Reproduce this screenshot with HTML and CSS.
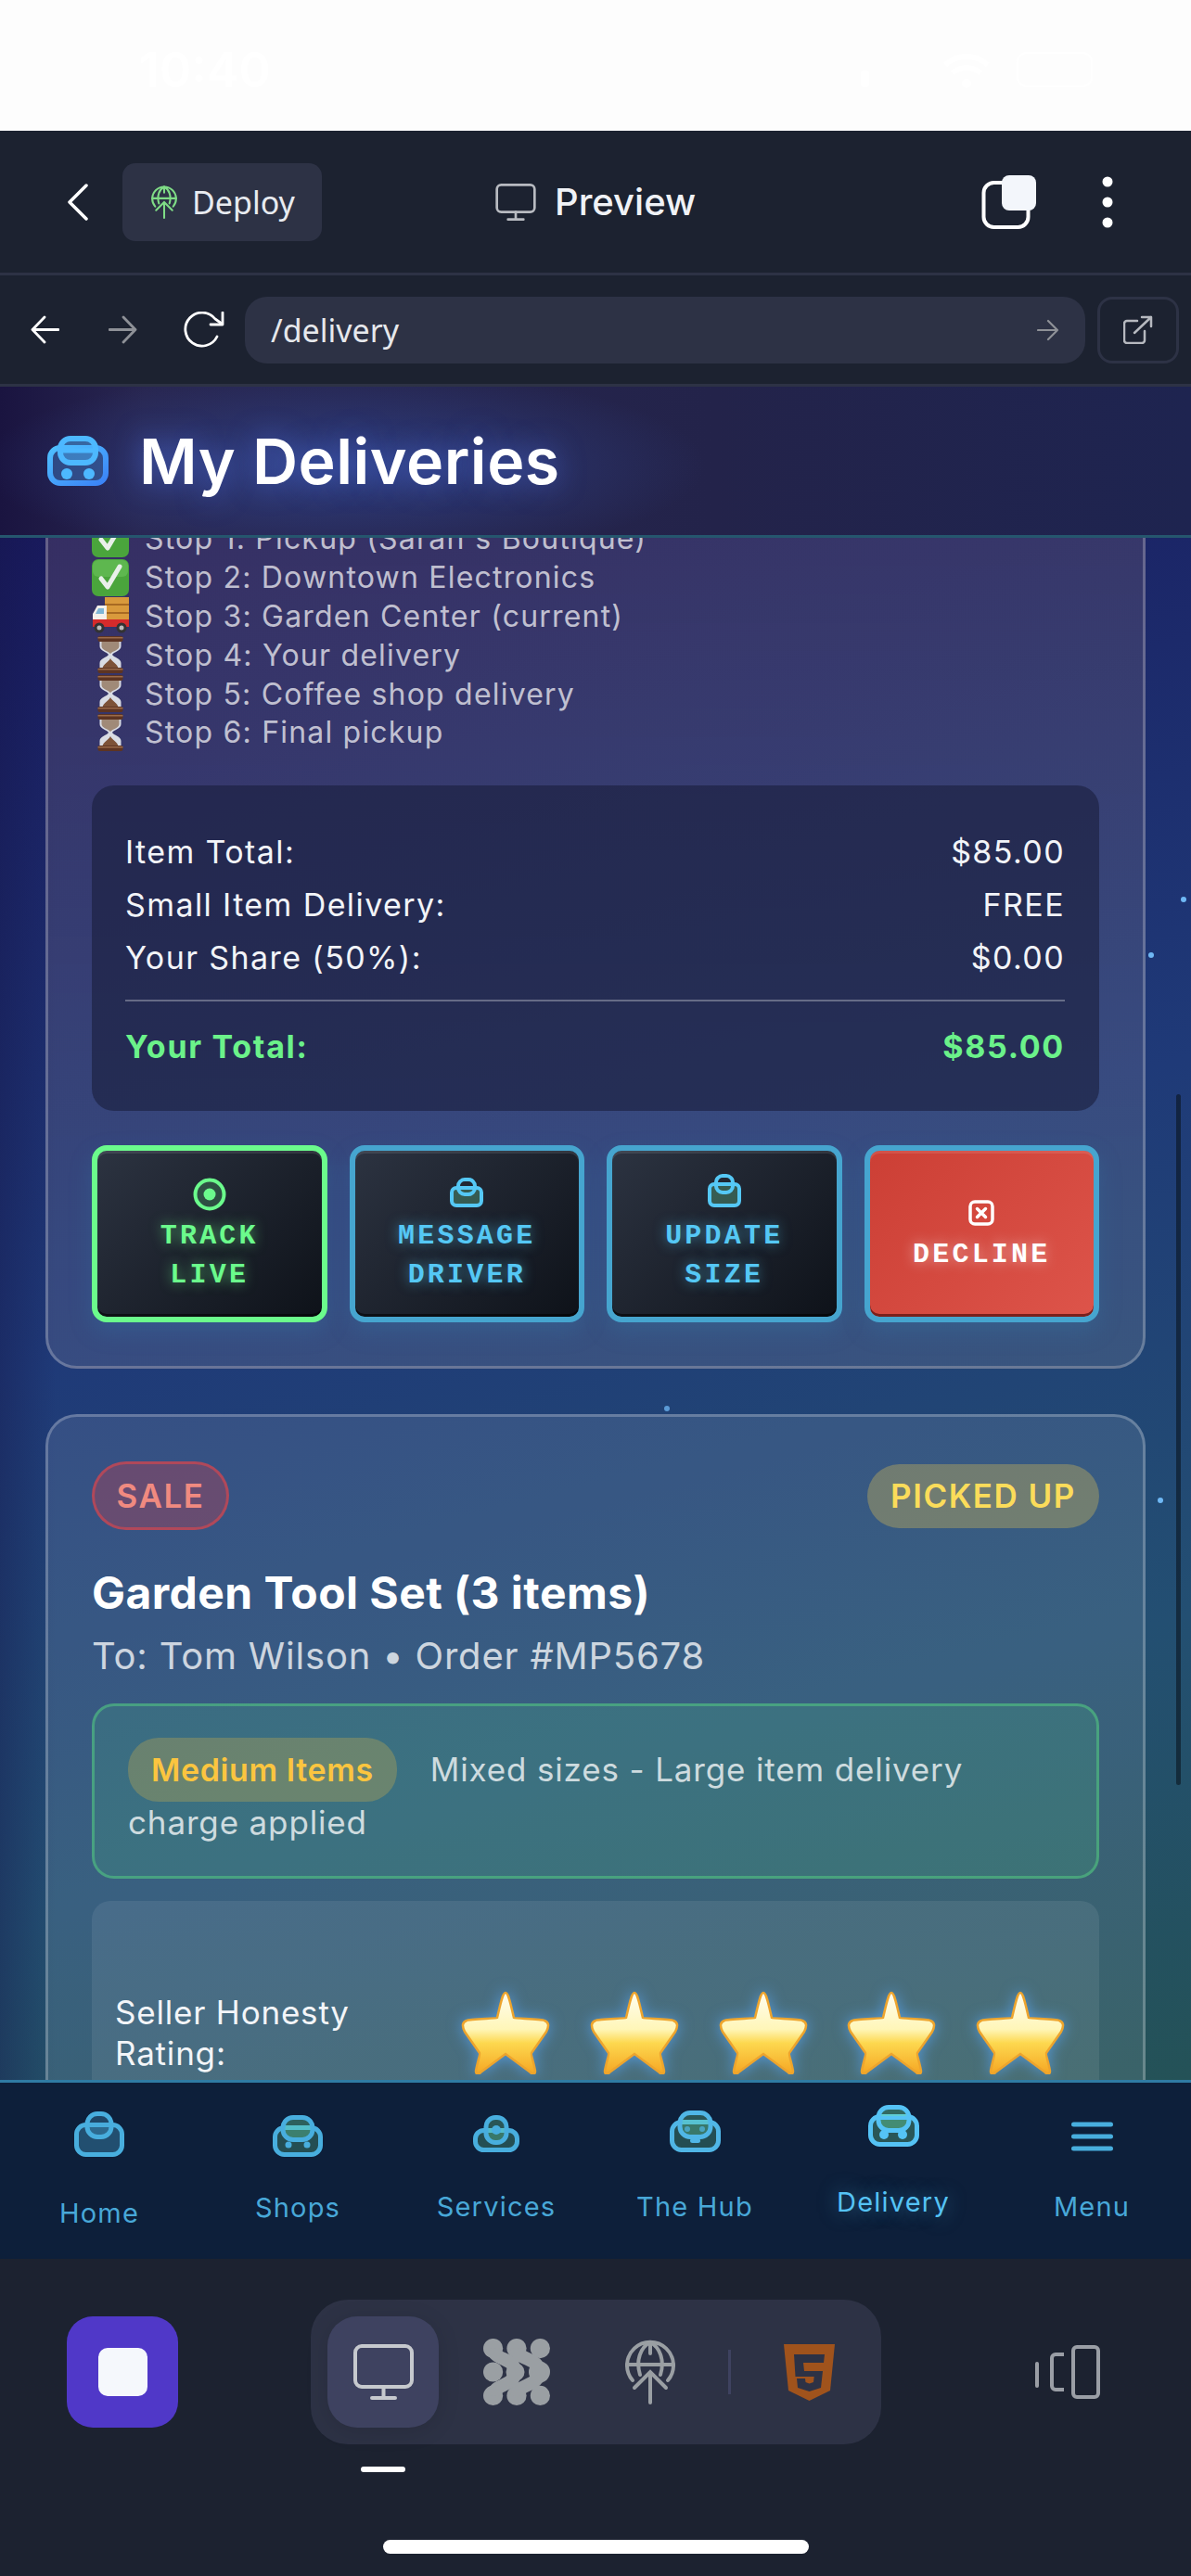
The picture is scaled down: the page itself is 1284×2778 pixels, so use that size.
FILE: index.html
```html
<!DOCTYPE html>
<html lang="en">
<head>
<meta charset="utf-8">
<title>My Deliveries</title>
<link rel="stylesheet" href="styles.css">
</head>
<body>
<svg class="defs" width="0" height="0" aria-hidden="true">
  <defs>
    <linearGradient id="logoGrad" x1="0" y1="0" x2="1" y2="1"><stop offset="0" stop-color="#4fc0ff"/><stop offset="1" stop-color="#3b82f6"/></linearGradient>
    <linearGradient id="starGrad" x1="0" y1="0" x2="0" y2="1"><stop offset="0" stop-color="#fffdf0"/><stop offset=".45" stop-color="#fff6b8"/><stop offset=".62" stop-color="#fdd84f"/><stop offset="1" stop-color="#f5a623"/></linearGradient>
    <symbol id="i-check" viewBox="0 0 40 40"><rect width="40" height="40" rx="7" fill="#4aa53c"/><rect x="1" y="1" width="38" height="18" rx="6" fill="#6cc35c" opacity=".6"/><path d="M10 21l7 9L30 8" fill="none" stroke="#e9f0ea" stroke-width="5" stroke-linecap="round" stroke-linejoin="round"/></symbol>
    <symbol id="i-truck" viewBox="0 0 40 40"><rect x="14" y="0" width="26" height="26" fill="#d99a3c"/><path d="M14 8h26M14 17h26" stroke="#a86a22" stroke-width="2"/><path d="M1 30V18l5-9h10v21z" fill="#f4f0ea"/><path d="M4 18l3-6h6v6z" fill="#7fb6d6"/><rect x="1" y="24" width="39" height="8" fill="#d52b2b"/><circle cx="8" cy="33" r="5.5" fill="#333"/><circle cx="8" cy="33" r="2.5" fill="#bbb"/><circle cx="32" cy="33" r="5.5" fill="#333"/><circle cx="32" cy="33" r="2.5" fill="#bbb"/></symbol>
    <symbol id="i-hour" viewBox="0 0 27 40"><path d="M2 5h23v6c0 5-8 6-9.500 9 1.500 3 9.500 4 9.500 9v6H2v-6c0-5 8-6 9.500-9C10 17 2 16 2 11z" fill="#d9dce4"/><path d="M4 6h19v5c0 4-7 5-9.500 8C11 16 4 15 4 11z" fill="#a08a78"/><path d="M13.500 24c2 4 8 6 8.500 11H5c.500-5 6.500-7 8.500-11z" fill="#7d5238"/><rect width="27" height="6" rx="2" fill="#5d3422"/><rect y="1" width="27" height="1.500" fill="#9a6a4a"/><rect y="34" width="27" height="6" rx="2" fill="#5d3422"/><rect y="35" width="27" height="1.500" fill="#9a6a4a"/></symbol>
    <symbol id="i-star" viewBox="0 0 96 90"><path d="M48 2c3 0 5 10 9 27 2 1 30 1 33 3 5 2 5 6 2 12L76 67c-1 1 4 16 4 20 0 3-3 3-5 1L48 68 21 88c-2 2-5 2-5-1 0-4 5-19 4-20L4 44C1 38 1 34 6 32c3-2 31-2 33-3C43 12 45 2 48 2z" fill="url(#starGrad)" stroke="#eda42d" stroke-width="2.500"/></symbol>
    <symbol id="i-globe" viewBox="0 0 54 70"><g fill="none" stroke="currentColor" stroke-width="4" stroke-linecap="round"><path d="M8 44A25 25 0 1 1 46 44"/><path d="M16 38C11 22 17 8 27 3c10 5 16 19 11 35"/><path d="M2 27h50"/><path d="M27 3v12"/><path d="M27 68V36M10 52l17-17 17 17"/></g></symbol>
    <symbol id="i-monitor" viewBox="0 0 65 60"><g fill="none" stroke="currentColor" stroke-width="4" stroke-linecap="round"><rect x="2" y="2" width="61" height="44" rx="7"/><path d="M32.500 46v12M20 58h25"/></g></symbol>
  </defs>
</svg>

<div class="screen">
  <div class="status">
    <span class="clock">10:40</span>
    <svg class="status-icons" width="255" height="44" viewBox="0 0 255 44"><rect x="3" y="22" width="9" height="18" rx="3" fill="#fff"/><path d="M94 16a34 34 0 0 1 46 0M102 25a22 22 0 0 1 30 0" fill="none" stroke="#fff" stroke-width="6"/><circle cx="117" cy="36" r="5" fill="#fff"/><rect x="172" y="3" width="80" height="36" rx="10" fill="none" stroke="#fff" stroke-width="2"/></svg>
  </div>

  <header class="topbar">
    <svg class="back" width="23" height="40" viewBox="0 0 23 40"><path d="M21 2L3 20l18 18" fill="none" stroke="#fff" stroke-width="3.500" stroke-linecap="round" stroke-linejoin="round"/></svg>
    <div class="deploy">
      <svg class="deploy-icon" width="28" height="36"><use href="#i-globe"/></svg>
      <span>Deploy</span>
    </div>
    <div class="preview">
      <svg class="preview-icon" width="44" height="40"><use href="#i-monitor"/></svg>
      <span>Preview</span>
    </div>
    <svg class="tabs" width="59" height="59" viewBox="0 0 59 59"><rect x="2.500" y="9" width="48" height="48" rx="11" fill="none" stroke="#fff" stroke-width="4"/><rect x="22" y="1" width="37" height="38" rx="8" fill="#f3f6fb"/></svg>
    <svg class="kebab" width="12" height="56" viewBox="0 0 12 56"><circle cx="6" cy="6" r="5.500" fill="#fff"/><circle cx="6" cy="28" r="5.500" fill="#fff"/><circle cx="6" cy="50" r="5.500" fill="#fff"/></svg>
  </header>

  <nav class="urlbar">
    <svg class="nav-btn" width="31" height="31" viewBox="0 0 31 31"><path d="M30 15.500H2M15 2L2 15.500 15 29" fill="none" stroke="#fff" stroke-width="2.800" stroke-linecap="round" stroke-linejoin="round"/></svg>
    <svg class="nav-btn nav-next" width="31" height="31" viewBox="0 0 31 31"><path d="M1 15.500h28M16 2l13 13.500L16 29" fill="none" stroke="#8e9197" stroke-width="2.800" stroke-linecap="round" stroke-linejoin="round"/></svg>
    <svg class="nav-btn nav-reload" width="44" height="40" viewBox="0 0 44 40"><path d="M36 27A18 18 0 1 1 34 8l7 5" fill="none" stroke="#fff" stroke-width="2.800" stroke-linecap="round"/><path d="M42 1v13H29" fill="none" stroke="#fff" stroke-width="2.800" stroke-linecap="round" stroke-linejoin="round"/></svg>
    <div class="address">
      <span>/delivery</span>
      <svg width="24" height="24" viewBox="0 0 24 24"><path d="M1 12h21M12 2l10 10-10 10" fill="none" stroke="#8e9197" stroke-width="2.200" stroke-linecap="round" stroke-linejoin="round"/></svg>
    </div>
    <div class="open-box">
      <svg width="32" height="31" viewBox="0 0 32 31"><path d="M15 6H4a3 3 0 0 0-3 3v18a3 3 0 0 0 3 3h16a3 3 0 0 0 3-3V17" fill="none" stroke="#b6b9bf" stroke-width="2.500" stroke-linecap="round"/><path d="M12 19L30 2M20 2h10v10" fill="none" stroke="#b6b9bf" stroke-width="2.500" stroke-linecap="round" stroke-linejoin="round"/></svg>
    </div>
  </nav>

  <div class="app-header">
    <svg class="logo" width="66" height="54" viewBox="0 0 66 54"><rect x="3" y="13" width="60" height="38" rx="11" fill="rgba(77,170,255,.3)" stroke="url(#logoGrad)" stroke-width="6"/><rect x="14" y="3" width="38" height="26" rx="11" fill="rgba(77,184,255,.45)" stroke="#4db8ff" stroke-width="6"/><path d="M17 16h32" stroke="#4db8ff" stroke-width="5"/><circle cx="21" cy="41" r="6" fill="#4db8ff"/><circle cx="45" cy="41" r="6" fill="#4db8ff"/></svg>
    <h1>My Deliveries</h1>
  </div>

  <main class="scroller">
    <section class="card card-scrolled">
      <ul class="stops">
        <li><svg class="emoji"><use href="#i-check"/></svg>Stop 1: Pickup (Sarah's Boutique)</li>
        <li><svg class="emoji"><use href="#i-check"/></svg>Stop 2: Downtown Electronics</li>
        <li><svg class="emoji"><use href="#i-truck"/></svg>Stop 3: Garden Center (current)</li>
        <li><svg class="emoji"><use href="#i-hour"/></svg>Stop 4: Your delivery</li>
        <li><svg class="emoji"><use href="#i-hour"/></svg>Stop 5: Coffee shop delivery</li>
        <li><svg class="emoji"><use href="#i-hour"/></svg>Stop 6: Final pickup</li>
      </ul>

      <div class="fare">
        <div class="fare-row"><span>Item Total:</span><span>$85.00</span></div>
        <div class="fare-row"><span>Small Item Delivery:</span><span>FREE</span></div>
        <div class="fare-row"><span>Your Share (50%):</span><span>$0.00</span></div>
        <div class="fare-row fare-total"><span>Your Total:</span><span>$85.00</span></div>
      </div>

      <div class="actions">
        <button class="action action-green">
          <svg width="36" height="36" viewBox="0 0 36 36"><circle cx="18" cy="18" r="15.500" fill="rgba(107,251,140,.2)" stroke="#6bfb8c" stroke-width="4"/><circle cx="18" cy="18" r="6.500" fill="#6bfb8c"/></svg>
          <span>TRACK<br>LIVE</span>
        </button>
        <button class="action">
          <svg class="icon-message" width="36" height="32" viewBox="0 0 36 32"><rect x="2" y="11" width="32" height="19" rx="5" fill="rgba(107,220,160,.3)" stroke="#55c8f5" stroke-width="4"/><rect x="9" y="2" width="18" height="16" rx="7" fill="none" stroke="#55c8f5" stroke-width="4"/></svg>
          <span>MESSAGE<br>DRIVER</span>
        </button>
        <button class="action">
          <svg class="icon-update" width="36" height="36" viewBox="0 0 36 36"><rect x="2" y="11" width="32" height="23" rx="5" fill="rgba(107,220,160,.3)" stroke="#55c8f5" stroke-width="4"/><rect x="9" y="2" width="18" height="18" rx="7" fill="none" stroke="#55c8f5" stroke-width="4"/></svg>
          <span>UPDATE<br>SIZE</span>
        </button>
        <button class="action action-red">
          <svg width="28" height="28" viewBox="0 0 28 28"><rect x="2" y="2" width="24" height="24" rx="5" fill="none" stroke="#fff" stroke-width="3.500"/><path d="M9.500 9.500l9 9M18.500 9.500l-9 9" stroke="#fff" stroke-width="3.500" stroke-linecap="round"/></svg>
          <span>DECLINE</span>
        </button>
      </div>
    </section>

    <section class="card card-next">
      <div class="badges">
        <span class="badge badge-sale">SALE</span>
        <span class="badge badge-status">PICKED UP</span>
      </div>
      <h2>Garden Tool Set (3 items)</h2>
      <p class="sub">To: Tom Wilson • Order #MP5678</p>
      <div class="size-box"><span class="size-pill">Medium Items</span>Mixed sizes - Large item delivery charge applied</div>
      <div class="rating">
        <span class="rating-label">Seller Honesty Rating:</span>
        <div class="stars">
          <svg class="star"><use href="#i-star"/></svg>
          <svg class="star"><use href="#i-star"/></svg>
          <svg class="star"><use href="#i-star"/></svg>
          <svg class="star"><use href="#i-star"/></svg>
          <svg class="star"><use href="#i-star"/></svg>
        </div>
      </div>
    </section>

    <span class="spark spark-a"></span>
    <span class="spark spark-b"></span>
    <span class="spark spark-c"></span>
    <span class="spark spark-d"></span>
    <span class="thumb"></span>
  </main>

  <nav class="tabbar">
    <a class="tab tab-home">
      <svg width="54" height="49" viewBox="0 0 54 49"><rect x="2.500" y="14.500" width="49" height="32" rx="10" fill="rgba(74,168,216,.35)" stroke="#48aede" stroke-width="5"/><rect x="14" y="2.500" width="26" height="25" rx="11" fill="rgba(74,168,216,.3)" stroke="#48aede" stroke-width="5"/></svg>
      <span>Home</span>
    </a>
    <a class="tab tab-shops">
      <svg width="54" height="45" viewBox="0 0 54 45"><rect x="2.500" y="13.500" width="49" height="29" rx="10" fill="rgba(107,220,160,.25)" stroke="#48aede" stroke-width="5"/><rect x="11" y="2.500" width="32" height="24" rx="11" fill="rgba(107,220,160,.35)" stroke="#48aede" stroke-width="5"/><circle cx="17" cy="32" r="3.500" fill="#48aede"/><circle cx="37" cy="32" r="3.500" fill="#48aede"/></svg>
      <span>Shops</span>
    </a>
    <a class="tab tab-services">
      <svg width="50" height="40" viewBox="0 0 50 40"><rect x="2.500" y="16.500" width="45" height="21" rx="9" fill="rgba(107,220,160,.25)" stroke="#48aede" stroke-width="5"/><rect x="14" y="2.500" width="22" height="27" rx="10" fill="rgba(107,220,160,.3)" stroke="#48aede" stroke-width="5"/><circle cx="25" cy="16" r="5" fill="#48aede"/></svg>
      <span>Services</span>
    </a>
    <a class="tab tab-hub">
      <svg width="55" height="45" viewBox="0 0 55 45"><rect x="2.500" y="12.500" width="50" height="30" rx="10" fill="rgba(107,220,160,.25)" stroke="#50b6e6" stroke-width="5"/><rect x="11" y="2.500" width="33" height="26" rx="11" fill="rgba(107,220,160,.3)" stroke="#50b6e6" stroke-width="5"/><circle cx="19" cy="20" r="3" fill="#50b6e6" opacity=".7"/><circle cx="35" cy="20" r="3" fill="#50b6e6" opacity=".7"/><rect x="22" y="30" width="11" height="5" rx="2.500" fill="#50b6e6"/></svg>
      <span>The Hub</span>
    </a>
    <a class="tab tab-delivery">
      <svg width="55" height="45" viewBox="0 0 55 45"><rect x="2.500" y="12.500" width="50" height="30" rx="10" fill="rgba(107,220,160,.3)" stroke="#55c3f5" stroke-width="5"/><rect x="11" y="2.500" width="33" height="25" rx="11" fill="rgba(107,220,160,.4)" stroke="#55c3f5" stroke-width="5"/><path d="M13 14h29" stroke="#55c3f5" stroke-width="4"/><circle cx="17" cy="32" r="5" fill="#55c3f5"/><circle cx="37" cy="32" r="5" fill="#55c3f5"/></svg>
      <span>Delivery</span>
    </a>
    <a class="tab tab-menu">
      <svg width="45" height="32" viewBox="0 0 45 32"><path d="M2.500 3h40M2.500 16h40M2.500 29h40" stroke="#48aede" stroke-width="5" stroke-linecap="round"/></svg>
      <span>Menu</span>
    </a>
  </nav>

  <footer class="toolbar">
    <div class="stop-btn"><span class="stop-square"></span></div>
    <div class="segment">
      <div class="seg-active"><svg width="65" height="60"><use href="#i-monitor"/></svg></div>
      <svg class="seg-dots" width="72" height="72" viewBox="0 0 72 72"><g fill="#9a9fa3"><circle cx="10.600" cy="10.600" r="10.600"/><circle cx="36" cy="10.600" r="10.600"/><circle cx="61.400" cy="10.600" r="10.600"/><circle cx="10.600" cy="36" r="10.600"/><circle cx="34.500" cy="36" r="10"/><circle cx="60.500" cy="36" r="11.500"/><circle cx="10.600" cy="61.400" r="10.600"/><circle cx="36" cy="61.400" r="10.600"/><circle cx="61.400" cy="61.400" r="10.600"/></g><path d="M10.600 10.600C11 24 34 20 34.500 36 34 52 11 48 10.600 61.400M36 10.600C37 24 60 20 60.500 36 60 52 37 48 36 61.400" fill="none" stroke="#9a9fa3" stroke-width="14"/></svg>
      <svg class="seg-globe" width="54" height="70"><use href="#i-globe"/></svg>
      <span class="seg-divider"></span>
      <svg class="html5" width="55" height="61" viewBox="0 0 55 61"><path d="M0 0h55l-5 50-22.500 11L5 50z" fill="#a0531c"/><path d="M11 11h33l-1 9H21l1 9h20l-2 18-12.500 4L15 47l-1-10h9l.500 4 4 1.500 4.500-1.500.700-6H12.500z" fill="#2d3245"/></svg>
    </div>
    <svg class="device" width="70" height="58" viewBox="0 0 70 58"><rect x="41" y="2" width="27" height="54" rx="4" fill="none" stroke="#9a9ea5" stroke-width="4"/><path d="M31 10h-9a4 4 0 0 0-4 4v30a4 4 0 0 0 4 4h9" fill="none" stroke="#9a9ea5" stroke-width="4"/><path d="M2 20v24" stroke="#9a9ea5" stroke-width="4" stroke-linecap="round"/></svg>
    <span class="pip"></span>
    <span class="home-bar"></span>
  </footer>
</div>
</body>
</html>
```
FILE: styles.css
```css
* { box-sizing: border-box; }
html, body { margin: 0; padding: 0; }
body { font-family: Inter, "Liberation Sans", sans-serif; background: #1c2230; color: #fff; }
.defs { position: absolute; }
.screen { width: 1284px; height: 2778px; display: flex; flex-direction: column; overflow: hidden; }

/* status bar */
.status { height: 141px; flex: none; background: #fdfdfd; display: flex; align-items: center; justify-content: space-between; padding: 10px 104px 0 150px; }
.clock { font-size: 52px; font-weight: 600; color: #fff; }
.status-icons { flex: none; }

/* top bar */
.topbar { height: 156px; flex: none; background: #1c2230; border-bottom: 3px solid #2d3245; display: flex; align-items: center; padding: 0 84px 0 72px; }
.back { flex: none; }
.deploy { margin-left: 37px; width: 215px; height: 84px; border-radius: 14px; background: #2d3245; display: flex; align-items: center; gap: 16px; padding-left: 31px; font-size: 34px; color: #e8ebf0; font-family: "Noto Sans", sans-serif; }
.deploy-icon { color: #7fdc86; }
.preview { margin-left: 187px; display: flex; align-items: center; gap: 20px; font-size: 40px; font-weight: 500; color: #f0f2f6; }
.preview-icon { color: #b8bbc1; }
.tabs { margin-left: auto; }
.kebab { margin-left: 71px; }

/* url bar */
.urlbar { height: 120px; flex: none; background: #1c2230; border-bottom: 3px solid #2d3245; display: flex; align-items: center; padding: 0 13px 0 33px; }
.nav-btn { flex: none; }
.nav-next { margin-left: 53px; }
.nav-reload { margin-left: 50px; }
.address { margin-left: 22px; width: 907px; height: 72px; border-radius: 24px; background: #2d3245; display: flex; align-items: center; justify-content: space-between; padding: 0 28px; font-size: 34px; color: #e6e8ec; font-family: "Noto Sans", sans-serif; }
.open-box { margin-left: 13px; width: 88px; height: 72px; border: 3px solid #2d3245; border-radius: 16px; display: flex; align-items: center; justify-content: center; }

/* app header */
.app-header { height: 163px; flex: none; display: flex; align-items: center; gap: 33px; padding: 0 0 0 51px; border-bottom: 3px solid #25566e; background:
  radial-gradient(ellipse 390px 105px at 370px 85px, rgba(52,78,160,.6), rgba(52,78,160,0)),
  linear-gradient(90deg, #1a1440 0%, #282650 12%, #23234a 60%, #1e2450 100%); }
.app-header h1 { margin: 0; font-size: 68px; font-weight: 600; line-height: 1; letter-spacing: .5px; text-shadow: 0 0 30px rgba(90,130,255,.5); }

/* scrolling content */
.scroller { position: relative; flex: 1; min-height: 0; overflow: hidden; padding: 0 49px; background:
  linear-gradient(90deg, rgba(20,20,70,.35) 0, rgba(20,20,70,0) 60px),
  linear-gradient(165deg, #191a5e 0%, #1f3a78 45%, #234f72 75%, #245257 100%); }
.card { border: 3px solid rgba(255,255,255,.24); border-radius: 34px; padding: 48px 47px 0; }
.card-scrolled { margin-top: -120px; padding-top: 97px; padding-bottom: 47px; background: linear-gradient(180deg, rgba(170,130,120,.2) 10%, rgba(255,225,205,.11) 80%); }
.card-next { margin-top: 49px; padding-bottom: 60px; background: rgba(255,255,255,.1); }

.stops { list-style: none; margin: 0; padding: 0; }
.stops li { height: 41.800px; display: flex; align-items: center; font-size: 32px; letter-spacing: 1.200px; color: rgba(255,255,255,.7); white-space: nowrap; }
.emoji { width: 40px; height: 40px; flex: none; margin-right: 17px; }

.fare { margin-top: 36.600px; height: 351px; border-radius: 24px; background: rgba(26,30,62,.62); padding: 43px 37px 0 36px; }
.fare-row { height: 57px; display: flex; align-items: center; justify-content: space-between; font-size: 34px; letter-spacing: 1.400px; color: #f2f4f8; }
.fare-total { margin-top: 17px; border-top: 2px solid rgba(255,255,255,.3); height: 79px; padding-top: 20px; font-weight: 700; letter-spacing: 1.700px; color: #6bf28a; }

.actions { margin-top: 37px; display: grid; grid-template-columns: repeat(4, 1fr); gap: 24px; }
.action { height: 191px; border: 6px solid #46a5cf; border-radius: 16px; background: linear-gradient(135deg, #2c3341, #0e1219); box-shadow: inset 0 3px 0 rgba(255,255,255,.1), inset 0 -3px 0 rgba(0,0,0,.55), 0 10px 24px rgba(50,130,180,.25); color: #55c8f5; font-family: "Liberation Mono", monospace; font-size: 30px; font-weight: 700; letter-spacing: 3.200px; line-height: 42px; display: flex; flex-direction: column; align-items: center; justify-content: center; gap: 6px; padding: 4px 0 0; text-shadow: 0 0 14px rgba(85,200,245,.6); }
.icon-message { margin-bottom: 4px; }
.icon-update { margin: -4px 0 4px; }
.action-green { border-color: #6bfb8c; color: #6bfb8c; text-shadow: 0 0 14px rgba(107,251,140,.6); }
.action-red { background: linear-gradient(135deg, #cc3f35, #dd544a); color: #fff; box-shadow: inset 0 3px 0 rgba(255,255,255,.1), inset 0 -3px 0 #7a201c, 0 10px 24px rgba(50,130,180,.25); text-shadow: 0 0 14px rgba(255,255,255,.5); gap: 10px; padding-top: 6px; }

.badges { display: flex; align-items: center; justify-content: space-between; }
.badge { display: flex; align-items: center; font-weight: 600; font-size: 35px; letter-spacing: 1.500px; border-radius: 37px; }
.badge-sale { height: 74px; width: 148px; justify-content: center; color: #f08a80; background: rgba(220,60,70,.3); border: 3px solid rgba(225,70,75,.6); }
.badge-status { height: 69px; width: 250px; justify-content: center; color: #fbdc5a; background: rgba(245,205,75,.3); }
h2 { margin: 40px 0 0; font-size: 48px; font-weight: 700; line-height: 56px; letter-spacing: .45px; color: #fff; }
.sub { margin: 12px 0 0; font-size: 40px; line-height: 56px; color: rgba(255,255,255,.75); letter-spacing: .8px; }
.size-box { margin-top: 23px; height: 189px; border: 3px solid rgba(85,210,130,.5); border-radius: 24px; background: rgba(80,200,130,.17); padding: 40px 40px 0 36px; font-size: 35px; line-height: 57px; letter-spacing: .85px; color: rgba(255,255,255,.75); }
.size-pill { margin-right: 36px; padding: 14px 25px; border-radius: 33px; background: rgba(245,190,60,.25); color: #fbc53f; font-size: 34px; font-weight: 600; letter-spacing: .6px; }
.rating { margin-top: 24px; height: 284px; border-radius: 20px; background: rgba(255,255,255,.08); display: flex; align-items: center; padding: 0 37px 0 25px; }
.rating-label { flex: 1; max-width: 300px; font-size: 35px; line-height: 44px; letter-spacing: .8px; color: #f3f5f8; }
.stars { margin-left: auto; display: flex; gap: 42.700px; }
.star { width: 96px; height: 90px; display: block; filter: drop-shadow(0 0 8px rgba(90,170,255,.7)); }

.spark { position: absolute; width: 6px; height: 6px; border-radius: 50%; background: #6fb8f5; }
.spark-a { left: 1273px; top: 387px; }
.spark-b { left: 1238px; top: 447px; }
.spark-c { left: 716px; top: 936px; opacity: .75; }
.spark-d { left: 1248px; top: 1035px; }
.thumb { position: absolute; right: 11px; top: 600px; width: 5px; height: 745px; border-radius: 3px; background: rgba(10,20,30,.6); }

/* tab bar */
.tabbar { height: 193px; flex: none; display: grid; grid-template-columns: repeat(6, 1fr); border-top: 3px solid #2f7ba3; background: #0d1f3a; }
.tab { display: flex; flex-direction: column; align-items: center; font-size: 29px; line-height: 36px; letter-spacing: 1.200px; color: #48a8d8; }
.tab svg { flex: none; }
.tab-home { padding-top: 31px; }
.tab-home span { margin-top: 43px; }
.tab-shops { padding-top: 35px; }
.tab-shops span { margin-top: 37px; }
.tab-services { padding-top: 35px; }
.tab-services span { margin-top: 41px; }
.tab-hub { padding-top: 30px; }
.tab-hub span { margin-top: 41px; }
.tab-delivery { padding-top: 24px; color: #55c3f5; }
.tab-delivery span { margin-top: 42px; text-shadow: 0 0 20px rgba(85,195,245,.5); }
.tab-menu { padding-top: 42px; }
.tab-menu span { margin-top: 42px; }

/* bottom toolbar */
.toolbar { position: relative; height: 342px; flex: none; background: #1c2230; display: flex; align-items: flex-start; padding: 62px 98px 0 72px; }
.stop-btn { width: 120px; height: 120px; border-radius: 28px; background: #5038c8; display: flex; align-items: center; justify-content: center; }
.stop-square { width: 53px; height: 52px; border-radius: 10px; background: #f5f8fc; }
.segment { margin-left: 143px; margin-top: -18px; width: 615px; height: 156px; border-radius: 40px; background: #2d3245; display: flex; align-items: center; padding-left: 18px; color: #9a9fa3; }
.seg-active { width: 120px; height: 120px; flex: none; display: flex; align-items: center; justify-content: center; background: #3e4260; border-radius: 32px; color: #c6c9ce; box-shadow: 0 4px 24px rgba(0,0,0,.12); }
.seg-dots { margin-left: 48px; flex: none; }
.seg-globe { margin-left: 81px; flex: none; }
.seg-divider { width: 3px; height: 48px; margin-left: 57px; background: #3e4260; flex: none; }
.html5 { margin-left: 57px; flex: none; }
.device { margin-left: auto; margin-top: 31px; }
.pip { position: absolute; left: 389px; top: 224px; width: 48px; height: 6px; border-radius: 3px; background: #fff; }
.home-bar { position: absolute; left: 413px; top: 303px; width: 459px; height: 15px; border-radius: 8px; background: #fff; }
```
